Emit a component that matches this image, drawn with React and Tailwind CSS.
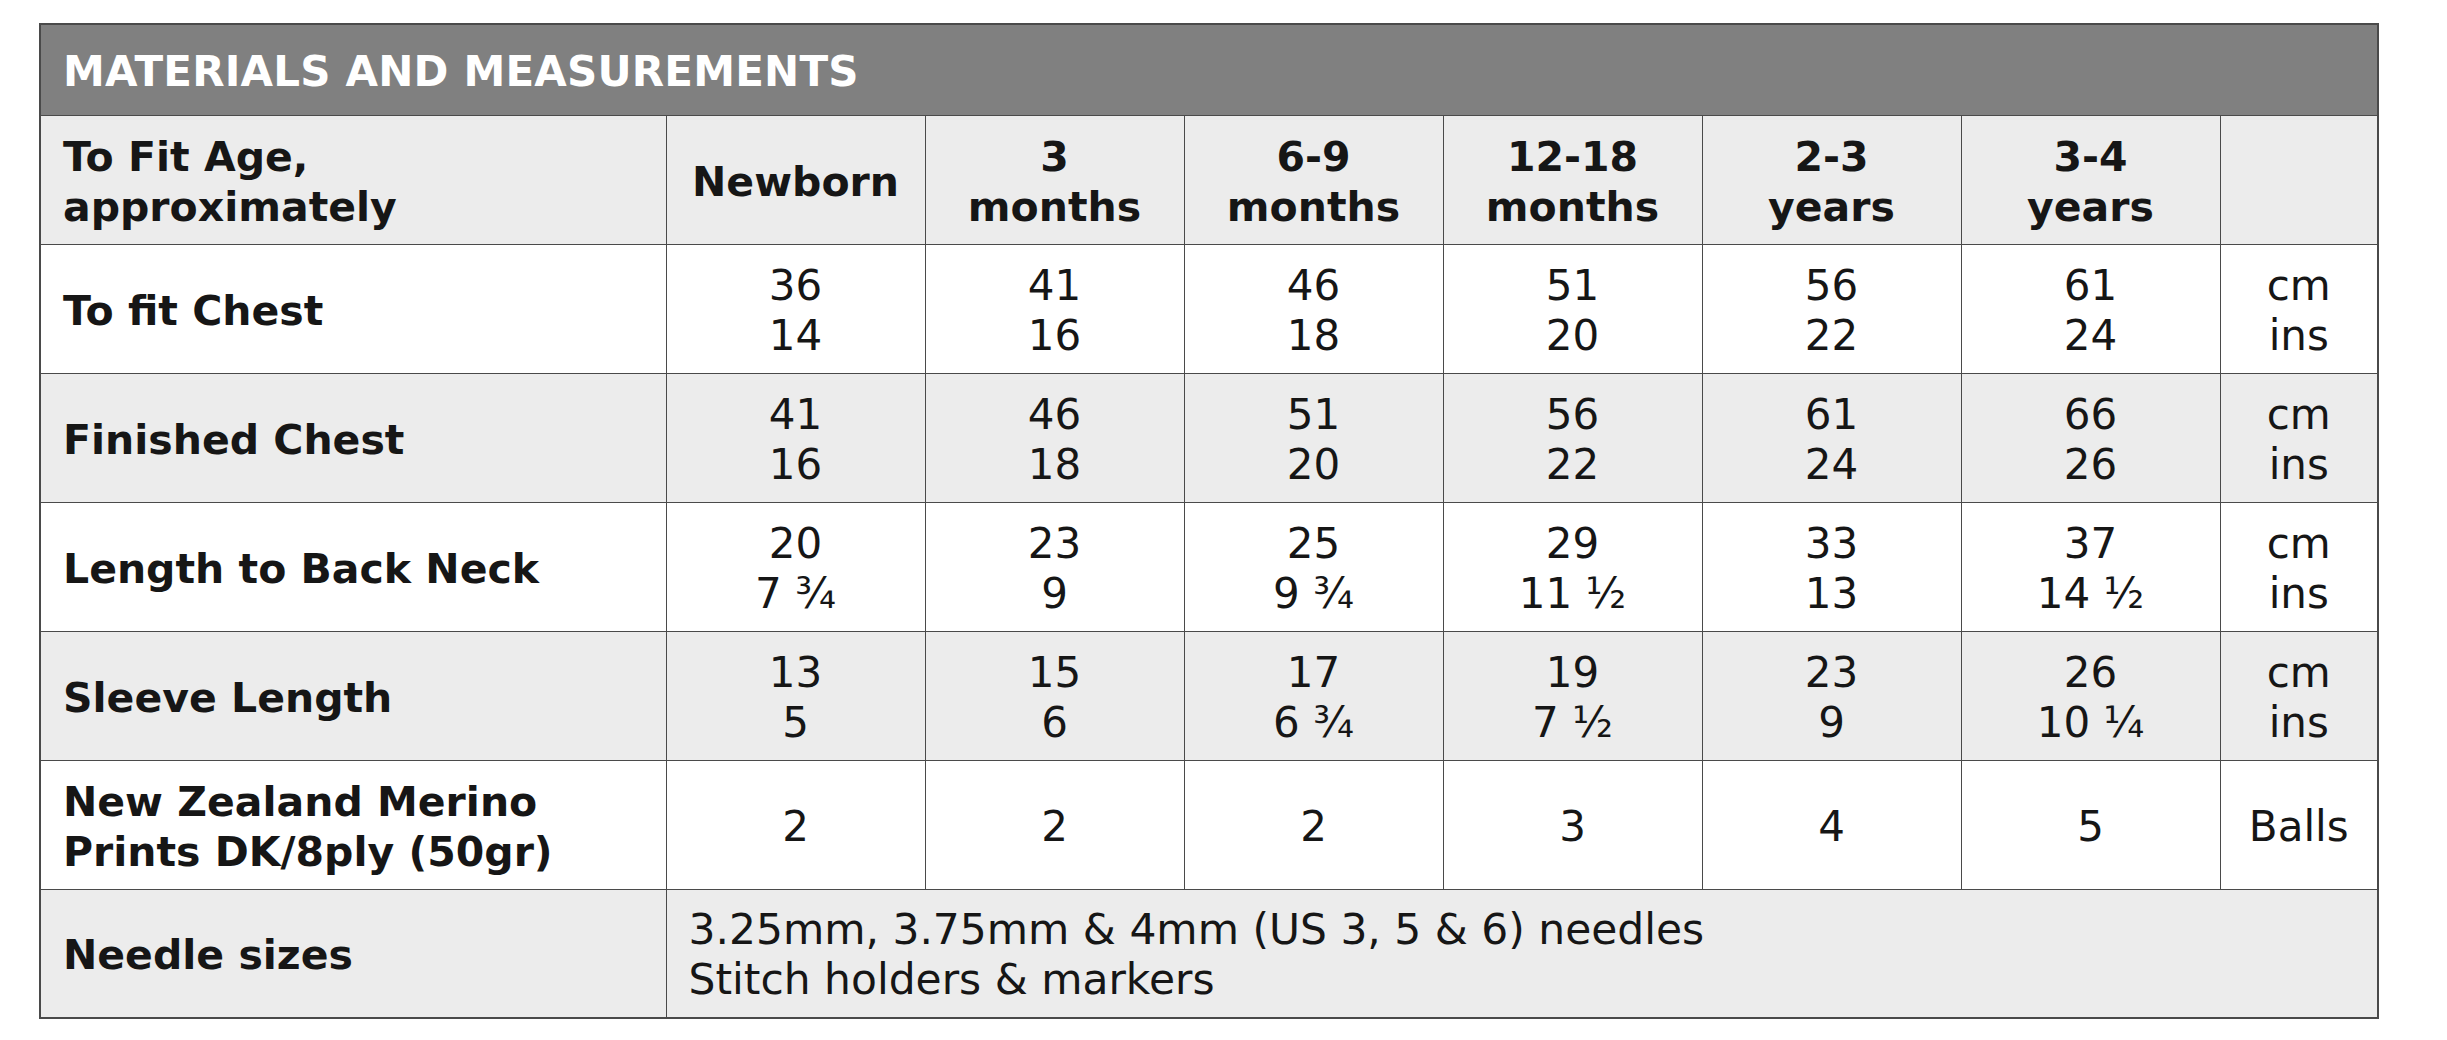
import React from 'react';

const ages = [
  ['Newborn'],
  ['3', 'months'],
  ['6-9', 'months'],
  ['12-18', 'months'],
  ['2-3', 'years'],
  ['3-4', 'years'],
];

const rows = [
  { label: ['To fit Chest'], values: [['36', '14'], ['41', '16'], ['46', '18'], ['51', '20'], ['56', '22'], ['61', '24']], unit: ['cm', 'ins'], bg: 'bg-white' },
  { label: ['Finished Chest'], values: [['41', '16'], ['46', '18'], ['51', '20'], ['56', '22'], ['61', '24'], ['66', '26']], unit: ['cm', 'ins'], bg: 'bg-[#ececec]' },
  { label: ['Length to Back Neck'], values: [['20', '7 ¾'], ['23', '9'], ['25', '9 ¾'], ['29', '11 ½'], ['33', '13'], ['37', '14 ½']], unit: ['cm', 'ins'], bg: 'bg-white' },
  { label: ['Sleeve Length'], values: [['13', '5'], ['15', '6'], ['17', '6 ¾'], ['19', '7 ½'], ['23', '9'], ['26', '10 ¼']], unit: ['cm', 'ins'], bg: 'bg-[#ececec]' },
  { label: ['New Zealand Merino', 'Prints DK/8ply (50gr)'], values: [['2'], ['2'], ['2'], ['3'], ['4'], ['5']], unit: ['Balls'], bg: 'bg-white' },
];

function Lines({ lines }) {
  return lines.map((l, i) => <div key={i}>{l}</div>);
}

export default function App() {
  const cell = 'border border-[#4a4a4a] align-middle pt-[4px] pb-0';
  return (
    <div className="min-h-[1040px] w-[2447px] bg-white pt-[23px] pl-[39px] text-[#161616]" style={{ fontFamily: '"DejaVu Sans", Verdana, sans-serif' }}>
      <table className="w-[2338px] table-fixed border-collapse border-2 border-[#4a4a4a] text-[41px] leading-[50px]">
        <colgroup>
          <col className="w-[626px]" />
          {ages.map((_, i) => <col key={i} className="w-[259px]" />)}
          <col className="w-[158px]" />
        </colgroup>
        <tbody>
          <tr className="h-[91px] bg-[#808080]">
            <td colSpan={8} className={`${cell} px-[22px] text-left text-[42px] font-bold tracking-[0.2px] text-white`}>
              MATERIALS AND MEASUREMENTS
            </td>
          </tr>
          <tr className="h-[129px] bg-[#ececec] font-bold">
            <td className={`${cell} px-[22px]`}>
              <Lines lines={['To Fit Age,', 'approximately']} />
            </td>
            {ages.map((a, i) => (
              <td key={i} className={`${cell} text-center`}>
                <Lines lines={a} />
              </td>
            ))}
            <td className={cell}></td>
          </tr>
          {rows.map((r, ri) => (
            <tr key={ri} className={`h-[129px] ${r.bg}`}>
              <td className={`${cell} px-[22px] font-bold`}>
                <Lines lines={r.label} />
              </td>
              {r.values.map((v, i) => (
                <td key={i} className={`${cell} text-center text-[42px]`}>
                  <Lines lines={v} />
                </td>
              ))}
              <td className={`${cell} text-center text-[42px]`}>
                <Lines lines={r.unit} />
              </td>
            </tr>
          ))}
          <tr className="h-[129px] bg-[#ececec]">
            <td className={`${cell} px-[22px] font-bold`}>Needle sizes</td>
            <td colSpan={7} className={`${cell} px-[22px] text-left text-[42.4px]`}>
              <Lines lines={['3.25mm, 3.75mm & 4mm (US 3, 5 & 6) needles', 'Stitch holders & markers']} />
            </td>
          </tr>
        </tbody>
      </table>
    </div>
  );
}
